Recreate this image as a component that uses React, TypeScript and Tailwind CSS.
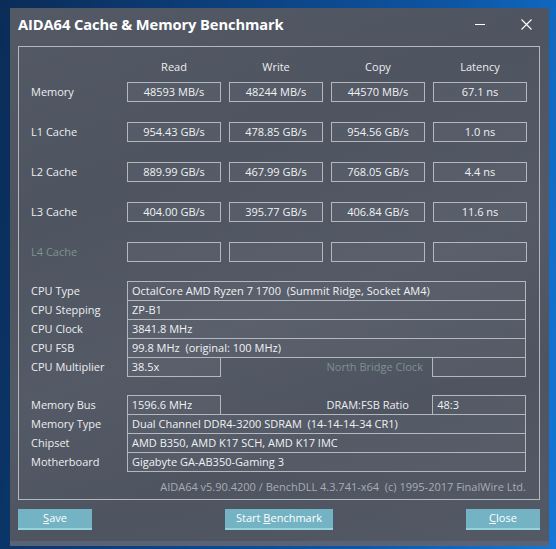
const font = { fontFamily: '"Open Sans", "Noto Sans", sans-serif' };

const speeds = [
  { label: "Memory", values: ["48593 MB/s", "48244 MB/s", "44570 MB/s", "67.1 ns"] },
  { label: "L1 Cache", values: ["954.43 GB/s", "478.85 GB/s", "954.56 GB/s", "1.0 ns"] },
  { label: "L2 Cache", values: ["889.99 GB/s", "467.99 GB/s", "768.05 GB/s", "4.4 ns"] },
  { label: "L3 Cache", values: ["404.00 GB/s", "395.77 GB/s", "406.84 GB/s", "11.6 ns"] },
  { label: "L4 Cache", values: ["", "", "", ""], dim: true },
];

const cpuRows = [
  ["CPU Type", "OctalCore AMD Ryzen 7 1700  (Summit Ridge, Socket AM4)"],
  ["CPU Stepping", "ZP-B1"],
  ["CPU Clock", "3841.8 MHz"],
  ["CPU FSB", "99.8 MHz  (original: 100 MHz)"],
];

const boardRows = [
  ["Memory Type", "Dual Channel DDR4-3200 SDRAM  (14-14-14-34 CR1)"],
  ["Chipset", "AMD B350, AMD K17 SCH, AMD K17 IMC"],
  ["Motherboard", "Gigabyte GA-AB350-Gaming 3"],
];

function Field({ children, className = "" }: { children?: React.ReactNode; className?: string }) {
  return (
    <div className={`h-[20px] border border-[#b4b8bd] bg-white/[0.04] flex items-center px-[4px] text-[11px] text-[#f0f2f4] whitespace-pre ${className}`}>
      {children}
    </div>
  );
}

function Button({ children, className = "" }: { children: React.ReactNode; className?: string }) {
  return (
    <div className={`h-[21px] bg-[#74b3c3] border-b-2 border-[#94d2dc] flex items-center justify-center text-[11px] text-white ${className}`}>
      <span>{children}</span>
    </div>
  );
}

export default function App() {
  return (
    <div
      className="w-[556px] h-[549px] overflow-hidden bg-[linear-gradient(100deg,#0a2c57_0%,#0c3d78_30%,#0d56a6_70%,#1378d8_100%)] pt-[8px] pl-[10px]"
      style={font}
    >
      <div className="w-[539px] h-[533px] bg-[#4e5460] bg-[linear-gradient(160deg,rgba(255,255,255,0.03)_0%,rgba(255,255,255,0)_30%,rgba(255,255,255,0.035)_55%,rgba(255,255,255,0)_75%,rgba(255,255,255,0.03)_100%)] flex flex-col">
        {/* title bar */}
        <div className="h-[32px] flex items-center pl-[8px] pr-[17px]">
          <div className="text-[14.7px] font-bold text-white tracking-[-0.1px]">AIDA64 Cache &amp; Memory Benchmark</div>
          <div className="ml-auto flex items-center gap-[36px]">
            <div className="w-[10px] h-px bg-white" />
            <svg width="11" height="11" viewBox="0 0 11 11" className="text-white">
              <path d="M0.5 0.5 L10.5 10.5 M10.5 0.5 L0.5 10.5" stroke="currentColor" strokeWidth="1.1" />
            </svg>
          </div>
        </div>

        {/* group box */}
        <div className="ml-[8px] mt-[6px] w-[522px] h-[454px] border border-[#b4b8bd] pl-[12px] pr-[13px] flex flex-col text-[11px] text-[#eceef1]">
          <div className="mt-[12px] h-[16px] grid grid-cols-[88px_94px_94px_94px_94px] gap-x-[8px] items-center">
            <div />
            {["Read", "Write", "Copy", "Latency"].map((h) => (
              <div key={h} className="text-center">{h}</div>
            ))}
          </div>

          <div className="mt-[7px] flex flex-col gap-[20px]">
            {speeds.map((r) => (
              <div key={r.label} className="grid grid-cols-[88px_94px_94px_94px_94px] gap-x-[8px] items-center">
                <div className={r.dim ? "text-[#7e928f]" : ""}>{r.label}</div>
                {r.values.map((v, i) => (
                  <Field key={i} className="justify-center">{v}</Field>
                ))}
              </div>
            ))}
          </div>

          {/* processor */}
          <div className="mt-[19px] flex flex-col">
            {cpuRows.map(([k, v], i) => (
              <div key={k} className={`flex items-center ${i > 0 ? "-mt-px" : ""}`}>
                <div className="w-[96px]">{k}</div>
                <Field className="flex-1">{v}</Field>
              </div>
            ))}
            <div className="flex items-center -mt-px">
              <div className="w-[96px]">CPU Multiplier</div>
              <Field className="w-[94px]">38.5x</Field>
              <div className="ml-[106px] w-[106px] text-[#7e928f]">North Bridge Clock</div>
              <Field className="w-[94px]" />
            </div>
          </div>

          {/* memory / board */}
          <div className="mt-[18px] flex flex-col">
            <div className="flex items-center">
              <div className="w-[96px]">Memory Bus</div>
              <Field className="w-[94px]">1596.6 MHz</Field>
              <div className="ml-[106px] w-[106px]">DRAM:FSB Ratio</div>
              <Field className="w-[94px]">48:3</Field>
            </div>
            {boardRows.map(([k, v]) => (
              <div key={k} className="flex items-center -mt-px">
                <div className="w-[96px]">{k}</div>
                <Field className="flex-1">{v}</Field>
              </div>
            ))}
          </div>

          <div className="mt-[7px] text-right text-[#a8adb4] whitespace-pre">
            AIDA64 v5.90.4200 / BenchDLL 4.3.741-x64  (c) 1995-2017 FinalWire Ltd.
          </div>
        </div>

        {/* buttons */}
        <div className="mt-[9px] pl-[8px] pr-[9px] flex items-center justify-between">
          <Button className="w-[74px]">
            <span className="underline underline-offset-1">S</span>ave
          </Button>
          <Button className="w-[108px]">
            Start <span className="underline underline-offset-1">B</span>enchmark
          </Button>
          <Button className="w-[74px]">
            <span className="underline underline-offset-1">C</span>lose
          </Button>
        </div>
      </div>
      <div className="w-[539px] h-[5px] bg-[#586377]" />
    </div>
  );
}
